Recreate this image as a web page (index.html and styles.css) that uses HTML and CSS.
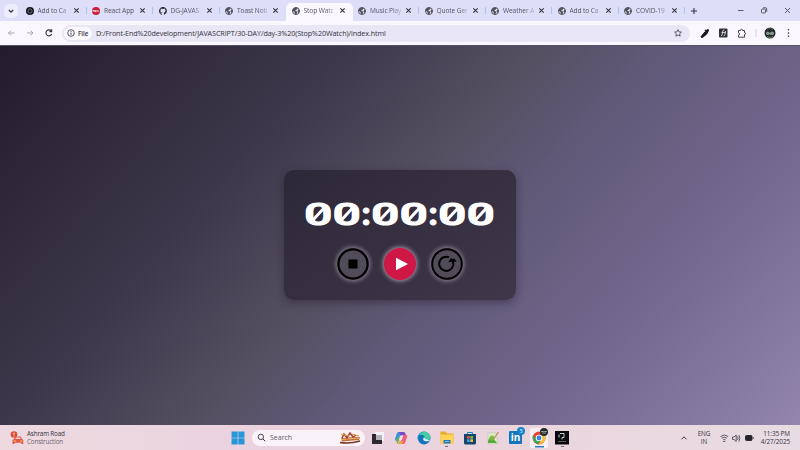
FILE: index.html
```html
<!DOCTYPE html>
<html lang="en">
<head>
<meta charset="utf-8">
<title>Stop Watch</title>
<link rel="stylesheet" href="styles.css">
</head>
<body>
<svg class="defs" aria-hidden="true">
  <symbol id="globe" viewBox="0 0 16 16"><circle cx="8" cy="8" r="7" fill="#e6e6f2" stroke="#50505e" stroke-width="2"/><path d="M2 4 7 1l4 1-1 3-3 1v2l3 1v3l-2 3-2-1-1-4-4-3Z M12 5l3 2-1 5-3-2Z" fill="#50505e"/></symbol>
  <symbol id="close" viewBox="0 0 8 8"><path d="m1.5 1.5 5 5m0-5-5 5" stroke="#353540" stroke-width="1.25"/></symbol>
</svg>
<header class="tabs">
  <button class="tab-menu"><svg viewBox="0 0 14 14"><path d="m4.8 6 2.200 2.200L9.200 6" fill="none" stroke="#33333c" stroke-width="1.3"/></svg></button>
  <div class="tab"><svg class="fav" viewBox="0 0 16 16"><circle cx="8" cy="8" r="8" fill="#15171d"/><circle cx="8" cy="8" r="4" fill="none" stroke="#71747c"/><path d="m8 3 4 3v4l-4 3-4-3V6Z" fill="none" stroke="#9699a0" stroke-width=".8"/></svg><span>Add to Ca</span><svg class="x"><use href="#close"/></svg></div>
  <div class="tab full"><svg class="fav" viewBox="0 0 16 16"><circle cx="8" cy="8" r="8" fill="#c8203e"/><path d="M2 10V6l3 3V6m2 0v4l3-3v3m1-4 3 4" fill="none" stroke="#fff" stroke-width="1.3"/></svg><span>React App</span><svg class="x"><use href="#close"/></svg></div>
  <div class="tab"><svg class="fav" viewBox="0 0 16 16"><path fill="#22242c" d="M8 0C3.6 0 0 3.6 0 8c0 3.5 2.3 6.500 5.500 7.600.4.1.5-.2.5-.4v-1.500c-2.200.5-2.700-1-2.700-1-.4-.9-.9-1.200-.9-1.200-.7-.5.1-.5.1-.5.8.1 1.200.8 1.200.8.7 1.200 1.900.9 2.300.7.1-.5.3-.9.500-1.100-1.800-.2-3.700-.9-3.700-4 0-.9.300-1.600.8-2.200-.1-.2-.4-1 .1-2.100 0 0 .7-.2 2.200.8a7.700 7.700 0 0 1 4 0c1.500-1 2.200-.8 2.200-.8.4 1.100.2 1.900.1 2.100.5.6.8 1.300.8 2.200 0 3.100-1.900 3.800-3.700 4 .3.3.6.8.6 1.500v2.200c0 .2.100.5.6.4A8 8 0 0 0 8 0Z"/></svg><span>DG-JAVAS</span><svg class="x"><use href="#close"/></svg></div>
  <div class="tab before"><svg class="fav"><use href="#globe"/></svg><span>Toast Noti</span><svg class="x"><use href="#close"/></svg></div>
  <div class="tab active"><svg class="fav"><use href="#globe"/></svg><span>Stop Watc</span><svg class="x"><use href="#close"/></svg></div>
  <div class="tab"><svg class="fav"><use href="#globe"/></svg><span>Music Play</span><svg class="x"><use href="#close"/></svg></div>
  <div class="tab"><svg class="fav"><use href="#globe"/></svg><span>Quote Ger</span><svg class="x"><use href="#close"/></svg></div>
  <div class="tab"><svg class="fav"><use href="#globe"/></svg><span>Weather A</span><svg class="x"><use href="#close"/></svg></div>
  <div class="tab"><svg class="fav"><use href="#globe"/></svg><span>Add to Ca</span><svg class="x"><use href="#close"/></svg></div>
  <div class="tab"><svg class="fav"><use href="#globe"/></svg><span>COVID-19</span><svg class="x"><use href="#close"/></svg></div>
  <svg class="plus" viewBox="0 0 8 8"><path d="M4 1v6M1 4h6" stroke="#353540" stroke-width="1.1"/></svg>
  <svg class="window" viewBox="0 0 64 20" fill="none" stroke="#4b4b57" stroke-width=".9"><path d="M4 9.500h5.500M51 7l5 5m0-5-5 5"/><rect x="27.500" y="8" width="4" height="4" rx="1"/><path d="M29 6.800h2.700q1 0 1 1v3"/></svg>
</header>
<nav class="toolbar">
  <svg class="nav-icons" viewBox="0 0 60 24" fill="none" stroke="#a7a7b3"><path d="M14.500 12H8.500m2.500-2.500L8.500 12l2.500 2.500M27 12h6m-2.500-2.500L33 12l-2.500 2.500"/><path d="M51.300 10a3 3 0 1 0 .4 3M51.700 8.300v2.300h-2.300" stroke="#34343e" stroke-width="1.100"/></svg>
  <div class="address">
    <span class="file"><svg viewBox="0 0 8 8"><circle cx="4" cy="4" r="3.300" fill="none" stroke="#34343e" stroke-width=".8"/><path d="M4 3.600v2.200M4 2v.8" stroke="#34343e" stroke-width=".9"/></svg>File</span>
    <span class="url">D:/Front-End%20development/JAVASCRIPT/30-DAY/day-3%20(Stop%20Watch)/index.html</span>
    <svg class="star" viewBox="0 0 24 24"><path d="m12 2 3 6.600 7.200.8-5.300 4.900 1.400 7.200L12 18l-6.300 3.500 1.400-7.200-5.300-4.900L9 8.600Z" fill="none" stroke="#454550" stroke-width="2.500"/></svg>
  </div>
  <svg class="actions" viewBox="0 0 106 24">
    <path d="m7.500 16.500-.6-.6 4-5 2 2-4.400 3.600Z" fill="#17171f" stroke="#17171f"/><path d="m10.500 9.500 1-1 1 .5 1-1q2 0 1.500 2l-1 1v1l-1 1Z" fill="#17171f"/>
    <rect x="25" y="7.500" width="8.500" height="9" rx="1" fill="#303238"/><path d="M27 15q1.500 0 1.500-4 0-2 1.800-2M27.500 11.500h4M29.500 15q2 0 2-5" fill="none" stroke="#e6e6ec" stroke-width=".8"/>
    <path d="M44.500 9.500h2q0-1.300 1-1.300t1 1.300h2v2q1 0 1 1t-1 1v2.700h-6v-2q1 0 1-1.200t-1-1.200Z" fill="none" stroke="#44444f"/>
    <path d="M62 8v8" stroke="#d5d2e6"/>
    <circle cx="76" cy="12" r="5.500" fill="#22272b"/><path d="M71.800 12q2-3 4 0 2-3 4.500 0l-1 2h-3l-.5-1-1 1h-2Z" fill="#87968c"/><path d="m73 8.500 3-1 3 1" stroke="#4c6749"/><path d="m73 15.500 3 1 3-1" stroke="#668c54" fill="none"/>
    <g fill="#34343e"><circle cx="94.500" cy="8.800" r=".8"/><circle cx="94.500" cy="12" r=".8"/><circle cx="94.500" cy="15.200" r=".8"/></g>
  </svg>
</nav>
<main class="page">
  <section class="watch">
    <svg class="time" viewBox="0 0 190 28" role="img" aria-label="00:00:00">
      <text x="-1" y="25.300" textLength="57" lengthAdjust="spacingAndGlyphs">00</text>
      <text x="56.500" y="25.300" class="colon">:</text>
      <text x="66" y="25.300" textLength="57" lengthAdjust="spacingAndGlyphs">00</text>
      <text x="123.500" y="25.300" class="colon">:</text>
      <text x="133" y="25.300" textLength="57" lengthAdjust="spacingAndGlyphs">00</text>
      <path class="slashes" d="m7.500 20.500 12-13m16.500 13 12-13M74.500 20.500l12-13m16.500 13 12-13M141.500 20.500l12-13m16.500 13 12-13"/>
    </svg>
    <div class="controls">
      <button class="control"><svg viewBox="0 0 32 32"><circle cx="16" cy="16" r="14.600" fill="none" stroke="#000" stroke-width="2.200"/><path d="M11.500 11.500h9v9h-9Z"/></svg></button>
      <button class="control play"><svg viewBox="0 0 32 32"><path d="m12 9.700 12 6.300-12 6.300Z" fill="#fff"/></svg></button>
      <button class="control"><svg viewBox="0 0 32 32"><circle cx="16" cy="16" r="14.800" fill="none" stroke="#000" stroke-width="1.900"/><path d="M18 9.200A7.100 7.100 0 1 0 22 18" fill="none" stroke="#000" stroke-width="2"/><path d="M22 18q.8-2.300-.2-5" fill="none" stroke="#000" stroke-width="2"/><path d="m17.500 14.500 1.800-4 4.200.2 2.300 3-3.500-.3Z"/></svg></button>
    </div>
  </section>
</main>
<footer class="taskbar">
  <div class="traffic">
    <svg viewBox="0 0 14 14"><circle cx="4" cy="3.500" r="3.300" fill="#d94b39"/><path d="M4 1.500V4m0 .7v1" stroke="#ffe3c5"/><path d="m4 8 1.200-2.600h5.500L12 8l1.300 1v4h-2v-1.200H4.500V13h-2V9Z" fill="#df5945"/><path d="m5.500 8 .6-1.500h4l.7 1.500Z" fill="#f5d7d8"/><path d="M3.500 10H6m4 0h2.500" stroke="#ffc458"/></svg>
    <div><b>Ashram Road</b><span>Construction</span></div>
  </div>
  <div class="dock">
    <svg class="start" viewBox="0 0 13 13"><path d="M.5.5h5.700v5.700H.5Zm6.300 0h5.700v5.700H6.800ZM.5 6.800h5.700v5.700H.5Zm6.300 0h5.700v5.700H6.800Z" fill="#2698d8"/></svg>
    <div class="search"><svg class="lens" viewBox="0 0 10 10"><circle cx="4.300" cy="4.300" r="3" fill="none" stroke="#34313c"/><path d="m6.600 6.600 2.500 2.500" stroke="#34313c" stroke-width="1.100"/></svg><span>Search</span><svg class="sled" viewBox="0 0 22 12"><path d="M1 10.500q10 1.500 20-1.500" fill="none" stroke="#753623" stroke-width="1.400"/><path d="m2 6 14-1 5 0-1 3-17 1.500Z" fill="#c4713c"/><path d="M2 7.500 20 6" stroke="#edbd70" stroke-width=".9"/><path d="m3 6 2-4 3 4 3-5 3 4 3-2" fill="none" stroke="#a23d2b" stroke-width="1.500"/><path d="m2 2 8 2m3-2 7 2" stroke="#db9c47" stroke-width="1.200"/></svg></div>
    <svg class="app" viewBox="0 0 14 14"><path d="M4 1h9v9H4Z" fill="#f5f3f7"/><path d="M1 3h4v6h6v4H1Z" fill="#2b292d"/><path d="M5 4h6v5H5Z" fill="#b5b1b7"/></svg>
    <svg class="app" viewBox="0 0 14 14"><path d="M1 8 3 2q.5-1 2-1h5L7 4 5 10H3q-2 0-2-2Z" fill="#3792dd"/><path d="m5 1 5 0q1 0 1.500 2l.5 1H9L7 5Z" fill="#7847c3"/><path d="M9 4h3q2 0 1 2l-2 6q-.5 1-2 1H5l2-3Z" fill="#ec6179"/><path d="m2 9 4-5-2 7q0 2 2 2H4q-1 0-1.500-2Z" fill="#74b847"/><path d="M5 10h4l-1 3H5q-1-1 0-3Z" fill="#f3a23b"/><path d="m6 5 3-1-1 5H5Z" fill="#f4dcee"/></svg>
    <svg class="app" viewBox="0 0 14 14"><circle cx="7" cy="7" r="6.500" fill="#168acb"/><path d="M2 4Q7-2 12 3q3 4-1 6-4 1-4-2 2-4-5-3Z" fill="#46d0a0"/><path d="M2 5q3-2 5 0-3 2 0 5 2 2 5 0-4 5-8 2-3-3-2-7Z" fill="#1770b8"/><path d="M7 6.500Q5 9 8 10q3 1 5-1-2 0-4-.7Q7.500 7.500 7 6.500Z" fill="#e9eff5"/></svg>
    <svg class="app run" viewBox="0 0 14 14"><path d="M.5 1h5l1.500 2h6.500v10H.5Z" fill="#e6aa24"/><path d="M.5 4h13v9H.5Z" fill="#ffd35a"/><path d="M3.500 9.500h7V13h-7Z" fill="#2577b8"/><path d="M5 11h4" stroke="#74b9e9"/></svg>
    <svg class="app" viewBox="0 0 14 14"><path d="M4.500 4V1.500h5V4" fill="none" stroke="#1786cb"/><path d="M1 3h12v9q0 1.500-1.500 1.500h-9Q1 13.500 1 12Z" fill="#17446a"/><path d="M4 5h2.700v2.700H4Z" fill="#e84c3e"/><path d="M7.300 5H10v2.700H7.300Z" fill="#73be44"/><path d="M4 8.300h2.700V11H4Z" fill="#30a9e4"/><path d="M7.300 8.300H10V11H7.300Z" fill="#f6c13b"/></svg>
    <svg class="app" viewBox="0 0 14 14"><path d="m2 2 8-.5 2 11-10 .5Z" fill="#dde8cc" stroke="#b7c2a5" stroke-width=".5"/><path d="M2 12q0-6 4-6l5 6Z" fill="#54ac36"/><circle cx="6" cy="7" r="2.500" fill="#75bf43"/><path d="m7 9 5.500-8" stroke="#b5864d" stroke-width="1.100"/></svg>
    <div class="linkedin">in<i>5</i></div>
    <div class="chrome"><svg viewBox="0 0 14 14"><circle cx="7" cy="7" r="6.500" fill="#e44434"/><path d="M1.300 4Q-1 10 6 13.500L9 8 4 8Z" fill="#32a956"/><path d="M7 4h6Q15 12 6.500 13.500L10 8Z" fill="#f8c536"/><circle cx="7" cy="7" r="3.300" fill="#fff"/><circle cx="7" cy="7" r="2.400" fill="#3d85df"/></svg><svg class="avatar" viewBox="0 0 8 8"><circle cx="4" cy="4" r="4" fill="#24292b"/><path d="M1 3.500h6M2 5h4" stroke="#8d9890"/></svg></div>
    <svg class="app run" viewBox="0 0 14 14"><path d="M0 0h14v14H0Z" fill="#09090d"/><path d="M5 3h4v4H7v2M4 4v3" fill="none" stroke="#c3ccda"/><path d="M3 11h8" stroke="#5c6169"/></svg>
  </div>
  <div class="tray">
    <svg class="up" viewBox="0 0 8 8"><path d="m1.500 5.300 2.500-2.500 2.500 2.500" fill="none" stroke="#34313c"/></svg>
    <div class="language"><span>ENG</span><span>IN</span></div>
    <svg class="status" viewBox="0 0 36 12" fill="none" stroke="#514c57" stroke-width=".9"><path d="M.5 4.500q3.800-3 7.600 0M1.700 6.200q2.600-2 5.200 0M3.100 7.900q1.200-1 2.400 0"/><path d="m3.500 9 .8 1 .8-1" fill="#514c57"/><path d="M12.500 5H14l2.200-2v6.500l-2.200-2h-1.500Zm5-.5q1.200 1.700 0 3.500m1.300-5q2.200 3.300 0 6.500"/><rect x="25.500" y="3.500" width="6.500" height="5" rx="1" fill="#26232c" stroke="#26232c"/><path d="M33.300 5v2"/></svg>
    <div class="clock"><span>11:35 PM</span><span>4/27/2025</span></div>
  </div>
</footer>
</body>
</html>
```
FILE: styles.css
```css
* { box-sizing: border-box; }
body { margin: 0; width: 800px; height: 450px; overflow: hidden; display: flex; flex-direction: column; font-family: "Open Sans", "Noto Sans", sans-serif; font-size: 6.4px; color: #34343e; }
svg { display: block; flex: none; }
button { border: 0; padding: 0; background: none; }
.defs { width: 0; height: 0; position: absolute; }
.tabs { height: 21px; flex: none; display: flex; align-items: center; background: #dedef9; padding-left: 4px; }
.tab-menu { width: 14px; height: 14px; border-radius: 5px; background: #ededfd; margin-right: 2px; }
.tab-menu svg { width: 14px; height: 14px; }
.tab { width: 66.5px; height: 21px; display: flex; align-items: center; padding-left: 5.5px; background: linear-gradient(#a9c8e5, #a9c8e5) right center / 1px 7px no-repeat; }
.tab .fav { width: 8px; height: 8px; margin-right: 4px; }
.tab span { width: 31px; white-space: nowrap; color: #555564; font-size: 6.6px; letter-spacing: -.1px; -webkit-mask-image: linear-gradient(90deg, #000 70%, rgba(0, 0, 0, .3) 98%); }
.tab.full span { -webkit-mask-image: none; }
.tab .x { width: 7px; height: 7px; margin-left: 4.2px; }
.tab.before { background: none; }
.tab.active { background: #faf8fe; height: 18px; margin-top: 3px; padding-bottom: 3px; border-radius: 5px 5px 0 0; }
.plus { width: 8px; height: 8px; margin-left: 4.500px; }
.window { width: 64px; height: 20px; margin-left: auto; margin-right: 2px; }
.toolbar { height: 24px; flex: none; display: flex; align-items: center; background: #faf8fe; }
.nav-icons { width: 60px; height: 24px; margin-right: 2px; }
.address { width: 628px; height: 17px; border-radius: 9px; background: #e9e6f5; display: flex; align-items: center; padding: 0 8px 0 2px; }
.file { width: 28px; height: 13px; border-radius: 7px; background: #faf8fe; display: flex; align-items: center; gap: 3px; padding-left: 3px; font-size: 6.2px; font-weight: 600; }
.file svg { width: 8px; height: 8px; }
.url { margin-left: 4px; font-size: 7.2px; letter-spacing: -.1px; white-space: nowrap; flex: 1; }
.star { width: 8px; height: 8px; }
.actions { width: 106px; height: 24px; margin-left: 4px; }
.page { height: 380px; flex: none; display: flex; align-items: center; justify-content: center; background: linear-gradient(132deg, #211b2b 0%, #2d2738 12%, #3d374b 30%, #565063 48%, #5f5876 57%, #746990 78%, #9385ad 100%); box-shadow: inset 0 1px #55505f; }
.watch { width: 232px; height: 130px; border-radius: 10px; background: linear-gradient(145deg, #2d2838, #3f374a); box-shadow: 0 3px 9px rgba(25, 20, 35, .4); display: flex; flex-direction: column; align-items: center; padding-top: 30px; }
.time { width: 190px; height: 28px; fill: #fff; overflow: visible; font-family: Roboto, sans-serif; font-size: 31.500px; font-weight: 500; stroke: #fff; stroke-width: 1px; stroke-linejoin: miter; }
.slashes { fill: none; stroke: #fff; stroke-width: 3px; }
.colon { font-size: 31px; font-weight: 900; }
.controls { display: flex; gap: 15px; margin-top: 20px; }
.control { width: 32px; height: 32px; border-radius: 50%; background: #514b5a; box-shadow: 0 0 4px 1px #8c8594; }
.control svg { width: 32px; height: 32px; }
.play { background: #cf1745; box-shadow: 0 0 4px 1px #a89aab; }
.taskbar { height: 25px; flex: none; display: grid; grid-template-columns: 231px 1fr 121px; align-items: center; background: linear-gradient(90deg, #edd9df, #ead2df 35%, #ebd5dd 65%, #e8dce3); }
.traffic { display: flex; align-items: center; gap: 3px; padding-left: 10px; font-size: 6.3px; letter-spacing: -.15px; line-height: 8px; }
.traffic svg { width: 14px; height: 14px; }
.traffic b, .traffic span { display: block; font-weight: 400; }
.traffic span { color: #70656f; }
.dock { display: flex; align-items: center; height: 25px; }
.start { width: 14px; height: 14px; margin-right: 7px; }
.search { width: 113px; height: 16px; border-radius: 8px; background: #faf2f9; display: flex; align-items: center; padding: 0 4px 0 5px; color: #625b67; font-size: 7px; margin-right: 5.500px; }
.lens { width: 9px; height: 9px; margin-right: 4px; }
.sled { width: 22px; height: 12px; margin-left: auto; }
.app, .linkedin, .chrome { width: 14px; height: 14px; margin-right: 9.1px; flex: none; }
.app.run { height: 19px; padding: 2.500px 0; background: radial-gradient(#786c76, #786c76) center bottom / 3px 1px no-repeat; }
.linkedin { position: relative; width: 13px; height: 13px; margin-right: 10.100px; border-radius: 1px; background: #1474bd; color: #fff; font-weight: 700; font-size: 10px; line-height: 13px; text-align: center; }
.linkedin i { position: absolute; width: 8px; height: 8px; border-radius: 50%; background: #1682cb; right: -3px; top: -4px; font-size: 5px; line-height: 8px; font-weight: 400; font-style: normal; }
.chrome { position: relative; width: 18px; height: 20px; margin: 0 7.100px 0 -2px; padding: 3px 2px; border-radius: 2px; background: linear-gradient(#267ec0, #267ec0) center bottom / 9px 1.500px no-repeat, #f7eff4; }
.chrome svg { width: 14px; height: 14px; }
.chrome .avatar { position: absolute; width: 8px; height: 8px; top: 0; right: 0; }
.tray { display: flex; align-items: center; height: 25px; font-size: 6.400px; letter-spacing: -.1px; line-height: 8px; }
.up { width: 8px; height: 8px; margin-left: .5px; }
.language { width: 20px; text-align: center; margin-left: 6.500px; }
.tray span { display: block; white-space: nowrap; }
.status { width: 36px; height: 12px; margin-left: 5.500px; }
.clock { margin-left: auto; padding-right: 10px; text-align: right; }
```
